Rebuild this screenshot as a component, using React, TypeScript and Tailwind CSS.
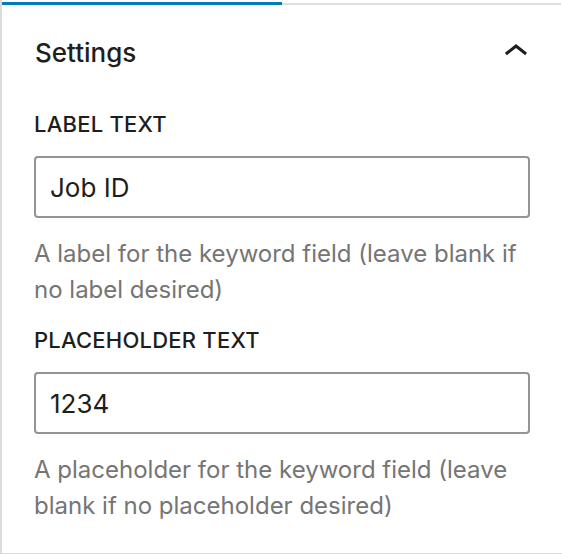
import React from 'react';

const font = { fontFamily: 'Inter, "Liberation Sans", sans-serif' };

const Field = ({ label, value, help }: { label: string; value: string; help: string }) => (
  <div className="flex flex-col">
    <label className="h-[30px] flex items-center text-[22px] font-medium uppercase tracking-[0.01em] text-[#1e1e1e]">
      {label}
    </label>
    <input
      readOnly
      value={value}
      className="mt-[17px] h-[62px] w-full rounded-[4px] border-2 border-[#949494] px-[14px] text-[26px] text-[#1e1e1e] outline-none"
      style={font}
    />
    <p className="mt-[18px] text-[24px] leading-[36px] text-[#757575]">{help}</p>
  </div>
);

export default function App() {
  return (
    <div className="w-[562px] h-[554px] bg-white border-l-2 border-b border-[#dcdcdc] flex flex-col" style={font}>
      <div className="mt-[2px] flex items-end">
        <div className="w-[280px] h-[3px] bg-[#007cba]" />
        <div className="flex-1 h-[2px] bg-[#e0e0e0] mr-px" />
      </div>

      <button className="h-[94px] flex items-center justify-between pl-[33px] pr-[22px] text-[26px] font-medium text-[#1e1e1e]">
        <span>Settings</span>
        <svg width="48" height="48" viewBox="0 0 24 24" fill="#1e1e1e">
          <path d="M6.5 12.4L12 8l5.5 4.4-.9 1.2L12 10l-4.6 3.6-1-1.2z" />
        </svg>
      </button>

      <div className="mt-[10px] px-[32px] flex flex-col gap-[17px]">
        <Field
          label="Label Text"
          value="Job ID"
          help="A label for the keyword field (leave blank if no label desired)"
        />
        <Field
          label="Placeholder Text"
          value="1234"
          help="A placeholder for the keyword field (leave blank if no placeholder desired)"
        />
      </div>
    </div>
  );
}
